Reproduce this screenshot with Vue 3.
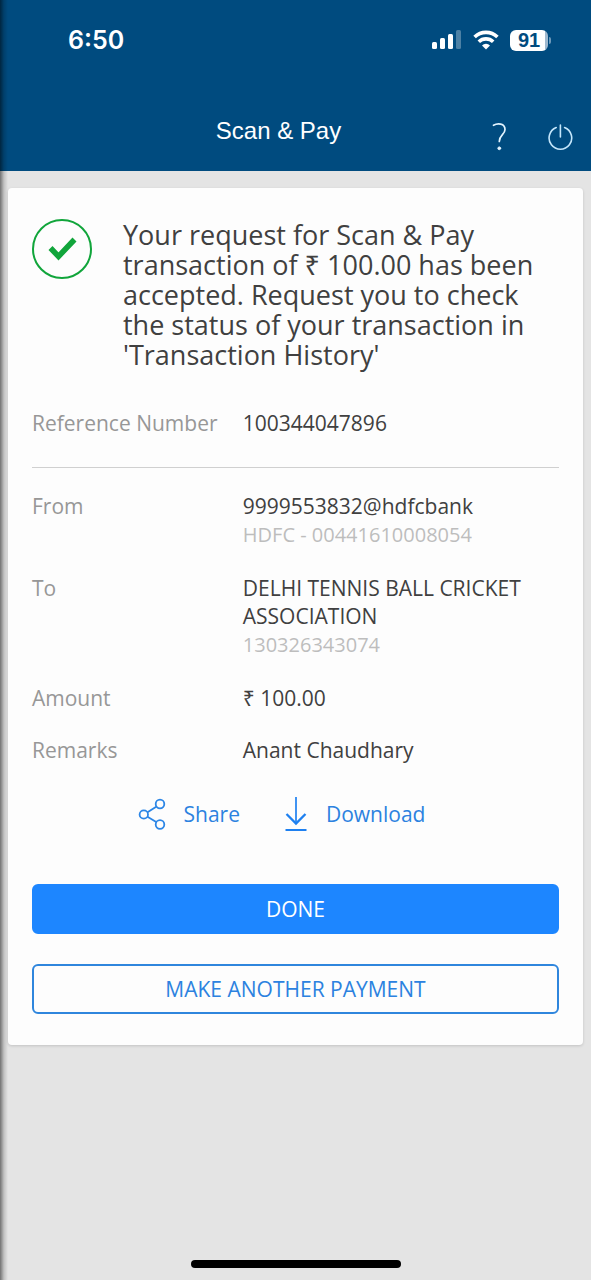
<script setup>
const transfer = [
  { label: 'From', value: '9999553832@hdfcbank', detail: 'HDFC - 00441610008054' },
  { label: 'To', value: 'DELHI TENNIS BALL CRICKET ASSOCIATION', detail: '130326343074' },
  { label: 'Amount', value: '₹ 100.00' },
  { label: 'Remarks', value: 'Anant Chaudhary' },
]
</script>

<template>
  <div class="screen">
    <header class="top">
      <div class="status">
        <time class="clock">6:50</time>
        <div class="indicators">
          <svg class="signal" width="30" height="20" viewBox="0 0 30 20" aria-hidden="true">
            <rect x="0" y="12" width="5" height="7" rx="1.5" fill="#fff" />
            <rect x="8" y="8" width="5" height="11" rx="1.5" fill="#fff" />
            <rect x="16" y="4" width="5" height="15" rx="1.5" fill="#fff" />
            <rect x="24" y="0" width="5" height="19" rx="1.5" fill="#fff" opacity="0.3" />
          </svg>
          <svg class="wifi" width="26" height="20" viewBox="0 0 26 20" fill="none" stroke="#fff" stroke-width="3.6" aria-hidden="true">
            <path d="M1.6 7a16.3 16.3 0 0 1 22.8 0" />
            <path d="M5.800 11.800a10.400 10.400 0 0 1 14.400 0" />
            <path d="M13 19.4l-4-4a5.700 5.700 0 0 1 8 0z" fill="#fff" stroke="none" />
          </svg>
          <div class="battery">
            <span class="cell">91</span>
            <span class="tip"></span>
          </div>
        </div>
      </div>
      <div class="titlebar">
        <h1>Scan &amp; Pay</h1>
        <div class="tools">
          <button type="button" aria-label="Help">
            <svg width="16" height="30" viewBox="0 0 16 30" fill="none" stroke="#e2f4ff" stroke-width="1.7" stroke-linecap="round" aria-hidden="true">
              <path d="M2.500 3.300C6.500 .9 14 1.100 14 7.600C14 12.600 8.300 13 8.300 19.500" />
              <circle cx="8.300" cy="26.300" r="1.400" fill="#e2f4ff" stroke-width="1" />
            </svg>
          </button>
          <button type="button" aria-label="Log out">
            <svg width="26" height="28" viewBox="0 0 26 28" fill="none" stroke="#c4e6fb" stroke-width="1.6" stroke-linecap="round" aria-hidden="true">
              <path d="M9.200 4.500A11.300 11.300 0 1 0 17.600 4.500" />
              <path d="M13.400 2v12" />
            </svg>
          </button>
        </div>
      </div>
    </header>

    <main class="card">
      <section class="notice">
        <svg width="60" height="60" viewBox="0 0 60 60" fill="none" stroke="#11a53b" aria-hidden="true">
          <circle cx="30" cy="30" r="29" stroke-width="2" />
          <path d="M18.500 29l8 8.500L42.500 20.500" stroke-width="5.500" />
        </svg>
        <p>Your request for Scan &amp; Pay transaction of ₹ 100.00 has been accepted. Request you to check the status of your transaction in 'Transaction History'</p>
      </section>

      <dl class="rows reference">
        <div class="row">
          <dt>Reference Number</dt>
          <dd>100344047896</dd>
        </div>
      </dl>

      <dl class="rows">
        <div v-for="item in transfer" :key="item.label" class="row">
          <dt>{{ item.label }}</dt>
          <dd>
            {{ item.value }}
            <span v-if="item.detail" class="detail">{{ item.detail }}</span>
          </dd>
        </div>
      </dl>

      <div class="links">
        <button type="button" class="link">
          <svg width="28" height="34" viewBox="0 0 28 34" fill="none" stroke="#2c86e6" stroke-width="1.800" aria-hidden="true">
            <circle cx="5.800" cy="17.500" r="4.200" />
            <circle cx="22" cy="7" r="4.300" />
            <circle cx="22" cy="27.500" r="4.300" />
            <path d="M9.500 15.300l8.700-5.600M9.500 19.700l8.700 5.300" />
          </svg>
          Share
        </button>
        <button type="button" class="link">
          <svg width="24" height="34" viewBox="0 0 24 34" fill="none" stroke="#1e80f0" aria-hidden="true">
            <path d="M12 0v26" stroke-width="1.700" />
            <path d="M2.500 17l9.500 9.500L21.500 17" stroke-width="2.300" />
            <path d="M1.500 33h21" stroke-width="2" />
          </svg>
          Download
        </button>
      </div>

      <div class="actions">
        <button type="button" class="action primary">DONE</button>
        <button type="button" class="action">MAKE ANOTHER PAYMENT</button>
      </div>
    </main>

    <div class="home"></div>
  </div>
</template>

<style>
body {
  background: #e4e4e4;
}
</style>

<style scoped>
.screen {
  position: relative;
  display: flex;
  flex-direction: column;
  min-height: 100vh;
  background: #e4e4e4;
  font-family: "Open Sans", "Noto Sans", sans-serif;
  color: #404040;
}
.screen::before {
  content: "";
  position: absolute;
  inset: 0 auto 0 0;
  width: 8px;
  background: linear-gradient(to right, rgba(0, 0, 0, 0.5), rgba(0, 0, 0, 0.15) 50%, rgba(0, 0, 0, 0));
}
button {
  padding: 0;
  border: 0;
  background: none;
  font: inherit;
  color: inherit;
  cursor: pointer;
}
svg {
  display: block;
  flex: none;
}
.top {
  background: #004b7f;
  color: #fff;
  font-family: Inter, "Liberation Sans", sans-serif;
}
.status {
  display: flex;
  align-items: center;
  justify-content: space-between;
  height: 80px;
  padding: 0 40px 0 68px;
}
.clock {
  font-size: 25px;
  font-weight: 600;
}
.indicators {
  display: flex;
  align-items: center;
  gap: 11px;
}
.battery {
  display: flex;
  align-items: center;
  gap: 1px;
}
.cell {
  width: 38px;
  border-radius: 6px;
  background: linear-gradient(to right, #fff 92%, #9fb9cf 92%);
  color: #004b7f;
  font-family: "Liberation Sans", sans-serif;
  font-size: 20px;
  font-weight: 700;
  line-height: 21px;
  text-align: center;
}
.tip {
  width: 2px;
  height: 7px;
  border-radius: 0 2px 2px 0;
  background: #6f9aba;
}
.titlebar {
  display: grid;
  grid-template-columns: 1fr auto 1fr;
  align-items: center;
  height: 91px;
  padding: 0 18px;
}
h1 {
  grid-column: 2;
  margin: 0;
  padding: 10px 34px 0 0;
  line-height: 32px;
  font-family: "Liberation Sans", sans-serif;
  font-size: 24px;
  font-weight: 400;
}
.tools {
  display: flex;
  align-items: center;
  justify-content: flex-end;
  gap: 40px;
  padding-top: 22px;
}
.card {
  margin: 17px 8px 0;
  padding: 31px 24px;
  border-radius: 4px;
  background: #fdfdfd;
  box-shadow: 0 1px 3px rgba(0, 0, 0, 0.15);
}
.notice {
  display: flex;
  gap: 31px;
}
.notice p {
  margin: 1px 0 0;
  font-size: 27px;
  line-height: 30px;
}
.rows {
  display: flex;
  flex-direction: column;
  gap: 24px;
  margin: 23px 0 0;
  font-size: 21px;
  line-height: 28px;
}
.reference {
  margin-top: 39px;
  padding-bottom: 30px;
  border-bottom: 1px solid #d0d0d0;
}
.reference + .rows {
  margin-top: 24px;
}
.row {
  display: grid;
  grid-template-columns: 2fr 3fr;
}
dt {
  color: #979797;
}
dd {
  margin: 0;
}
.detail {
  display: block;
  color: #bdbdbd;
  font-size: 20px;
  line-height: 30px;
}
.links {
  display: flex;
  justify-content: center;
  gap: 44px;
  margin-top: 33px;
  padding-right: 28px;
}
.link {
  display: flex;
  align-items: center;
  gap: 18px;
  color: #2c82e0;
  font-size: 21px;
  line-height: 34px;
}
.actions {
  display: flex;
  flex-direction: column;
  gap: 30px;
  margin-top: 53px;
}
.action {
  height: 50px;
  border: 2px solid #2f86dd;
  border-radius: 6px;
  color: #2c82e0;
  font-size: 21px;
}
.primary {
  border-color: #1d86ff;
  background: #1d86ff;
  color: #fff;
}
.home {
  width: 210px;
  height: 8px;
  margin: auto auto 12px;
  border-radius: 4px;
  background: #000;
}
</style>
